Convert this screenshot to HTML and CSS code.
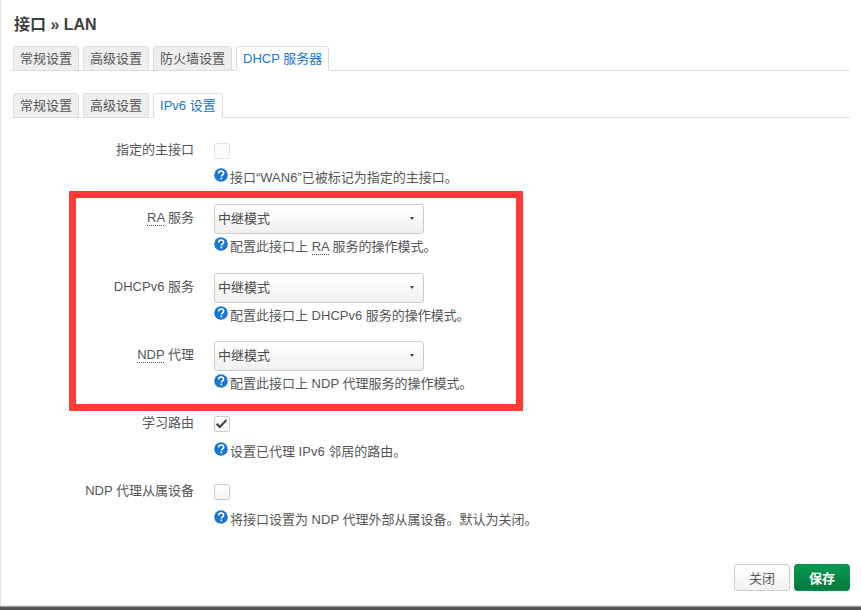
FILE: index.html
```html
<!DOCTYPE html>
<html lang="zh-CN">
<head>
<meta charset="utf-8">
<title>接口 » LAN</title>
<link rel="stylesheet" href="styles.css">
</head>
<body>
<svg class="defs" width="0" height="0" aria-hidden="true">
  <symbol id="help" viewBox="0 0 14 14">
    <circle cx="7" cy="7" r="6.8" fill="#1976d2"/>
    <path d="M4.6 5.4C4.7 3.9 5.8 3 7.1 3c1.5 0 2.5.9 2.5 2.1 0 1-.6 1.5-1.3 2-.6.4-.9.8-.9 1.5" fill="none" stroke="#fff" stroke-width="1.6"/>
    <rect x="6.5" y="9.6" width="1.7" height="1.7" fill="#fff"/>
  </symbol>
</svg>
<main class="modal">
  <h4 class="title">接口 » LAN</h4>
  <ul class="tabs tabs-main">
    <li class="tab">常规设置</li>
    <li class="tab">高级设置</li>
    <li class="tab">防火墙设置</li>
    <li class="tab active">DHCP 服务器</li>
  </ul>
  <ul class="tabs tabs-sub">
    <li class="tab">常规设置</li>
    <li class="tab">高级设置</li>
    <li class="tab active">IPv6 设置</li>
  </ul>
  <section class="form">
    <div class="row row-check row-first">
      <label class="label">指定的主接口</label>
      <div class="field">
        <span class="check disabled"></span>
        <p class="desc desc-check"><svg class="help"><use href="#help"/></svg>接口“WAN6”已被标记为指定的主接口。</p>
      </div>
    </div>
    <div class="row row-select row-ra">
      <label class="label"><abbr>RA</abbr> 服务</label>
      <div class="field">
        <div class="select">中继模式<span class="caret"></span></div>
        <p class="desc"><svg class="help"><use href="#help"/></svg>配置此接口上 <abbr>RA</abbr> 服务的操作模式。</p>
      </div>
    </div>
    <div class="row row-select">
      <label class="label">DHCPv6 服务</label>
      <div class="field">
        <div class="select">中继模式<span class="caret"></span></div>
        <p class="desc"><svg class="help"><use href="#help"/></svg>配置此接口上 DHCPv6 服务的操作模式。</p>
      </div>
    </div>
    <div class="row row-select">
      <label class="label"><abbr>NDP</abbr> 代理</label>
      <div class="field">
        <div class="select">中继模式<span class="caret"></span></div>
        <p class="desc"><svg class="help"><use href="#help"/></svg>配置此接口上 NDP 代理服务的操作模式。</p>
      </div>
    </div>
    <div class="row row-check row-learn">
      <label class="label">学习路由</label>
      <div class="field">
        <span class="check"><svg class="tick" viewBox="0 0 12 12"><path d="M1.4 5.8 4.1 8.6 9.8 2.6" fill="none" stroke="#404040" stroke-width="1.8"/></svg></span>
        <p class="desc desc-check"><svg class="help"><use href="#help"/></svg>设置已代理 IPv6 邻居的路由。</p>
      </div>
    </div>
    <div class="row row-check">
      <label class="label">NDP 代理从属设备</label>
      <div class="field">
        <span class="check"></span>
        <p class="desc desc-check"><svg class="help"><use href="#help"/></svg>将接口设置为 NDP 代理外部从属设备。默认为关闭。</p>
      </div>
    </div>
  </section>
  <footer class="actions">
    <button class="btn btn-close">关闭</button>
    <button class="btn btn-save">保存</button>
  </footer>
</main>
<div class="highlight"></div>
<div class="bottom-bar"></div>
</body>
</html>
```

FILE: styles.css
```css
* { box-sizing: border-box; }
html, body { margin: 0; padding: 0; height: 610px; overflow: hidden; background: #fff; }
body {
  font-family: "Liberation Sans", "Noto Sans CJK SC", sans-serif;
  font-size: 13px;
  color: #4a4a4a;
  position: relative;
}
.defs { position: absolute; }
.modal {
  height: 605px;
  padding: 16px 11px 0 9px;
  border-left: 1px solid #e4e4e4;
  display: flex;
  flex-direction: column;
}
.title {
  margin: 0 0 0 4px;
  font-size: 16px;
  line-height: 18px;
  font-weight: bold;
  color: #404040;
}
.tabs {
  list-style: none;
  margin: 12px 0 0;
  padding: 0 0 0 3px;
  display: flex;
  gap: 4px;
  border-bottom: 1px solid #ddd;
  height: 25px;
}
.tabs-sub { margin-top: 22px; }
.tab {
  height: 25px;
  padding: 0 6px;
  line-height: 24px;
  background: #eee;
  border: 1px solid #ddd;
  border-radius: 3px 3px 0 0;
  color: #555;
  white-space: nowrap;
}
.tab.active {
  background: #fff;
  color: #1976d2;
  border-bottom-color: #fff;
}
.form { display: flex; flex-direction: column; }
.row { display: flex; gap: 20px; }
.label {
  width: 184px;
  flex: none;
  text-align: right;
  line-height: 14px;
  color: #555;
}
.field { flex: 1; }
.row-check { height: 68px; }
.row-first { height: 61px; margin-top: 25px; }
.row-select { height: 68.5px; }
.row-select .label { padding-top: 7px; }
.row-learn { margin-top: 6.5px; }
.check {
  display: block;
  width: 16px;
  height: 16px;
  border: 1px solid #ccc;
  border-radius: 2px;
  background: linear-gradient(#fff, #f4f4f4);
}
.check.disabled { border-color: #e4e4e4; background: #fbfbfb; }
.tick { display: block; width: 14px; height: 14px; }
.select {
  position: relative;
  width: 210px;
  height: 30px;
  padding-left: 3px;
  line-height: 28px;
  border: 1px solid #ccc;
  border-radius: 3px;
  background: linear-gradient(#fff, #f0f0f0);
  color: #4a4a4a;
}
.caret {
  position: absolute;
  right: 9px;
  top: 12px;
  border-left: 2.5px solid transparent;
  border-right: 2.5px solid transparent;
  border-top: 3px solid #404040;
}
.desc { margin: 3px 0 0; line-height: 16px; color: #555; white-space: nowrap; }
.desc-check { margin-top: 10px; }
.row-first .desc-check { margin-top: 9px; }
.help { width: 14px; height: 14px; margin-right: 2px; vertical-align: 0; position: relative; top: 0; }
abbr { border-bottom: 1px dotted #505050; }
.actions {
  margin-top: auto;
  margin-bottom: 14px;
  display: flex;
  justify-content: flex-end;
  gap: 4px;
}
.btn {
  width: 56px;
  height: 27px;
  padding: 0;
  font: inherit;
  border-radius: 3px;
  border: 1px solid #ccc;
  background: linear-gradient(#fff, #f2f2f2);
  color: #555;
}
.btn-save {
  border-color: #0a8f4f;
  background: linear-gradient(#0a9a52, #007a3d);
  color: #fff;
  font-weight: bold;
}
.highlight {
  position: absolute;
  left: 69px;
  top: 191px;
  width: 454px;
  height: 220px;
  border: 7px solid #ff3838;
}
.bottom-bar {
  position: absolute;
  left: 0;
  right: 0;
  bottom: 0;
  height: 5px;
  background: linear-gradient(#e8e8e8 0, #e8e8e8 1px, #555 2px);
}
```
